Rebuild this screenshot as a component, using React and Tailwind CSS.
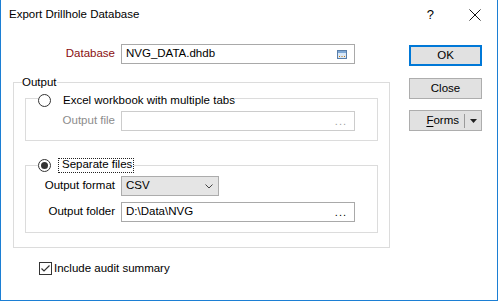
import React from 'react';

const font = { fontFamily: '"Liberation Sans", Arial, sans-serif' };

function Radio({ checked }) {
  return (
    <span className="w-[13px] h-[13px] rounded-full border border-[#333333] bg-white flex items-center justify-center shrink-0">
      {checked && <span className="w-[7px] h-[7px] rounded-full bg-[#333333]" />}
    </span>
  );
}

function BrowseIcon() {
  return (
    <svg width="10" height="9" viewBox="0 0 10 9" className="shrink-0">
      <rect x="0.5" y="0.5" width="9" height="8" fill="#dbe9f7" stroke="#5a7ea8" />
      <rect x="1" y="1" width="8" height="2" fill="#7fa9d6" />
      <rect x="2" y="6" width="1" height="1" fill="#c57a12" />
      <rect x="4.5" y="6" width="1" height="1" fill="#c57a12" />
      <rect x="7" y="6" width="1" height="1" fill="#c57a12" />
    </svg>
  );
}

function TextBox({ value, disabled, browse }) {
  return (
    <div
      className={`w-[234px] h-[20px] border bg-white flex items-center pl-[4px] pr-[7px] ${
        disabled ? 'border-[#cccccc]' : 'border-[#a9a9a9]'
      }`}
    >
      <span className="flex-1 text-[11.5px] leading-none text-black">{value}</span>
      {browse === 'icon' && <BrowseIcon />}
      {browse === 'dots' && (
        <span className={`text-[11px] leading-none tracking-[1px] ${disabled ? 'text-[#a0a0a0]' : 'text-black'}`}>...</span>
      )}
    </div>
  );
}

export default function App() {
  return (
    <div className="w-[499px] h-[302px] bg-white" style={font}>
      <div className="w-[498px] h-[301px] border-x border-b border-[#1c7fd4] flex flex-col text-black">
        {/* Title bar */}
        <div className="h-[30px] flex items-center pl-[8px] shrink-0">
          <span className="text-[11.5px] flex-1">Export Drillhole Database</span>
          <span className="text-[13px] mr-[35px]">?</span>
          <svg width="12" height="12" viewBox="0 0 12 12" className="mr-[16px]">
            <path d="M0.5 0.5 L11.5 11.5 M11.5 0.5 L0.5 11.5" stroke="#111" strokeWidth="1" />
          </svg>
        </div>

        <div className="flex flex-1">
          {/* Left column */}
          <div className="w-[389px] pl-[12px] flex flex-col">
            <div className="mt-[14px] flex items-center h-[20px]">
              <span className="w-[102px] text-right text-[11.5px] text-[#8a0f0f] mr-[6px]">Database</span>
              <TextBox value="NVG_DATA.dhdb" browse="icon" />
            </div>

            <fieldset className="mt-[12px] w-[377px] border border-[#dcdcdc] p-0 m-0 min-w-0 pb-[14px]">
              <legend className="ml-[8px] px-0 h-[12px] text-[11.5px] leading-[12px]">Output</legend>

              <fieldset className="ml-[11px] w-[353px] border border-[#dcdcdc] p-0 m-0 min-w-0 pb-[9px]">
                <legend className="h-[20px] flex items-end pb-[1px] ml-[12px] px-0">
                  <Radio />
                  <span className="ml-[12px] text-[11.5px] leading-[13px]">Excel workbook with multiple tabs</span>
                </legend>
                <div className="pt-[3px] flex items-center">
                  <span className="w-[89px] text-right text-[11.5px] text-[#8c8c8c] mr-[6px]">Output file</span>
                  <TextBox value="" disabled browse="dots" />
                </div>
              </fieldset>

              <fieldset className="mt-[16px] ml-[11px] w-[353px] border border-[#dcdcdc] p-0 m-0 min-w-0 pb-[10px]">
                <legend className="h-[16px] flex items-center ml-[12px] px-0">
                  <Radio checked />
                  <span className="ml-[7px] h-[15px] border border-dotted border-[#222] flex items-center pl-[3px] pr-[1px] text-[11.5px]">
                    Separate files
                  </span>
                </legend>
                <div className="pt-[3px] flex items-center">
                  <span className="w-[89px] text-right text-[11.5px] mr-[6px]">Output format</span>
                  <div className="w-[98px] h-[20px] bg-[#e5e5e5] border border-[#acacac] flex items-center pl-[4px] pr-[5px]">
                    <span className="flex-1 text-[11.5px] leading-none">CSV</span>
                    <svg width="8" height="5" viewBox="0 0 8 5">
                      <path d="M0.5 0.5 L4 4 L7.5 0.5" fill="none" stroke="#444" strokeWidth="1" />
                    </svg>
                  </div>
                </div>
                <div className="mt-[6px] flex items-center">
                  <span className="w-[89px] text-right text-[11.5px] mr-[6px]">Output folder</span>
                  <TextBox value="D:\Data\NVG" browse="dots" />
                </div>
              </fieldset>
            </fieldset>

            <div className="mt-[12px] ml-[26px] flex items-center">
              <span className="w-[13px] h-[13px] border border-[#333333] bg-white flex items-center justify-center">
                <svg width="11" height="11" viewBox="0 0 11 11">
                  <path d="M1.5 5.5 L4 8 L9.5 2.5" fill="none" stroke="#333" strokeWidth="1.2" />
                </svg>
              </span>
              <span className="ml-[2px] text-[11.5px]">Include audit summary</span>
            </div>
          </div>

          {/* Right column */}
          <div className="ml-[19px] mt-[15px] flex flex-col w-[73px]">
            <button className="h-[21px] bg-[#e1e1e1] border-2 border-[#0078d7] text-[11.5px] flex items-center justify-center">
              OK
            </button>
            <button className="mt-[12px] h-[21px] bg-[#e1e1e1] border border-[#adadad] text-[11.5px] flex items-center justify-center">
              Close
            </button>
            <div className="mt-[11px] h-[21px] bg-[#e1e1e1] border border-[#adadad] flex items-center">
              <span className="flex-1 text-right pr-[5px] text-[11.5px]">
                <span className="underline underline-offset-2">F</span>orms
              </span>
              <span className="w-px h-[14px] bg-[#9a9a9a]" />
              <span className="w-[16px] flex items-center justify-center">
                <svg width="7" height="4" viewBox="0 0 7 4">
                  <path d="M0 0 H7 L3.5 4 Z" fill="#222" />
                </svg>
              </span>
            </div>
          </div>
        </div>
      </div>
    </div>
  );
}
